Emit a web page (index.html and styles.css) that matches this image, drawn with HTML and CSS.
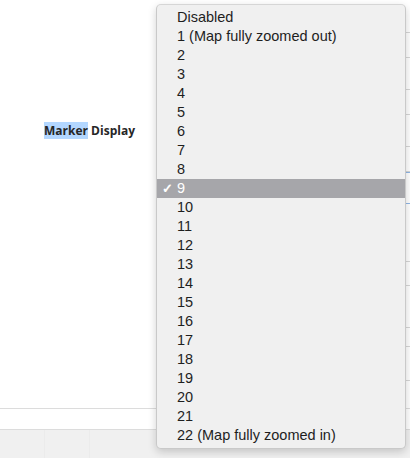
FILE: index.html
```html
<!DOCTYPE html>
<html>
<head>
<meta charset="utf-8">
<link rel="stylesheet" href="styles.css">
</head>
<body>
<div class="page">
  <div class="main">
    <div class="content">
      <div class="label"><span class="sel">Marker</span> Display</div>
    </div>
    <div class="table">
      <div class="tr" style="height:33px"></div>
      <div class="tr" style="height:25px"></div>
      <div class="tr" style="height:32px"></div>
      <div class="tr" style="height:25px"></div>
      <div class="tr" style="height:32px"></div>
      <div class="tr" style="height:25px"></div>
      <div class="tr blue" style="height:32px"></div>
      <div class="tr" style="height:58px"></div>
      <div class="tr" style="height:24px"></div>
      <div class="tr" style="height:42px"></div>
      <div class="tr" style="height:19px"></div>
      <div class="tr" style="height:34px"></div>
    </div>
  </div>
  <div class="strip"></div>
  <div class="footer"><span class="fdiv"></span><span class="fdiv"></span></div>

  <div class="menu">
    <div class="item">Disabled</div>
    <div class="item">1 (Map fully zoomed out)</div>
    <div class="item">2</div>
    <div class="item">3</div>
    <div class="item">4</div>
    <div class="item">5</div>
    <div class="item">6</div>
    <div class="item">7</div>
    <div class="item">8</div>
    <div class="item checked"><span class="check">✓</span>9</div>
    <div class="item">10</div>
    <div class="item">11</div>
    <div class="item">12</div>
    <div class="item">13</div>
    <div class="item">14</div>
    <div class="item">15</div>
    <div class="item">16</div>
    <div class="item">17</div>
    <div class="item">18</div>
    <div class="item">19</div>
    <div class="item">20</div>
    <div class="item">21</div>
    <div class="item">22 (Map fully zoomed in)</div>
  </div>
</div>
</body>
</html>
```
FILE: styles.css
```css
html, body {
  margin: 0;
  padding: 0;
  background: #ffffff;
}
.page {
  position: relative;
  width: 410px;
  height: 458px;
  overflow: hidden;
  display: flex;
  flex-direction: column;
}
.main {
  height: 409px;
  display: flex;
  border-bottom: 1px solid #dcdcdc;
  box-sizing: border-box;
}
.content {
  flex: 1;
  padding: 122px 0 0 44px;
}
.label {
  font-family: "Open Sans", sans-serif;
  font-weight: 700;
  font-size: 12px;
  line-height: 17px;
  color: #262626;
}
.sel {
  background: #b3d7ff;
}
.table {
  width: 60px;
  display: flex;
  flex-direction: column;
}
.tr {
  box-sizing: border-box;
  border-bottom: 1px solid #d6d6d6;
}
.tr.blue {
  border-top: 1px solid #8fb6e6;
  border-bottom: 1px solid #8fb6e6;
}
.strip {
  height: 21px;
  border-bottom: 1px solid #dcdcdc;
  box-sizing: border-box;
  background: #ffffff;
}
.footer {
  flex: 1;
  background: #f0f0f0;
  display: flex;
  padding-left: 44px;
  gap: 44px;
}
.fdiv {
  width: 1px;
  background: #ebebeb;
}
.menu {
  position: absolute;
  left: 156px;
  top: 4px;
  width: 250px;
  box-sizing: border-box;
  padding: 3px 0 3px;
  background: #f0f0f0;
  border: 1px solid #c9c9c9;
  border-top-color: #d6d6d6;
  border-radius: 5px;
  box-shadow: 0 3px 8px rgba(0, 0, 0, 0.18);
  font-family: "Liberation Sans", Arial, sans-serif;
  font-size: 14.5px;
  color: #1e1e1e;
}
.item {
  height: 19px;
  line-height: 19px;
  padding-left: 20px;
  position: relative;
  white-space: nowrap;
}
.item.checked {
  background: #a6a6aa;
  color: #ffffff;
}
.check {
  position: absolute;
  left: 5px;
  top: 0;
  font-size: 13px;
  font-weight: 700;
}
```
